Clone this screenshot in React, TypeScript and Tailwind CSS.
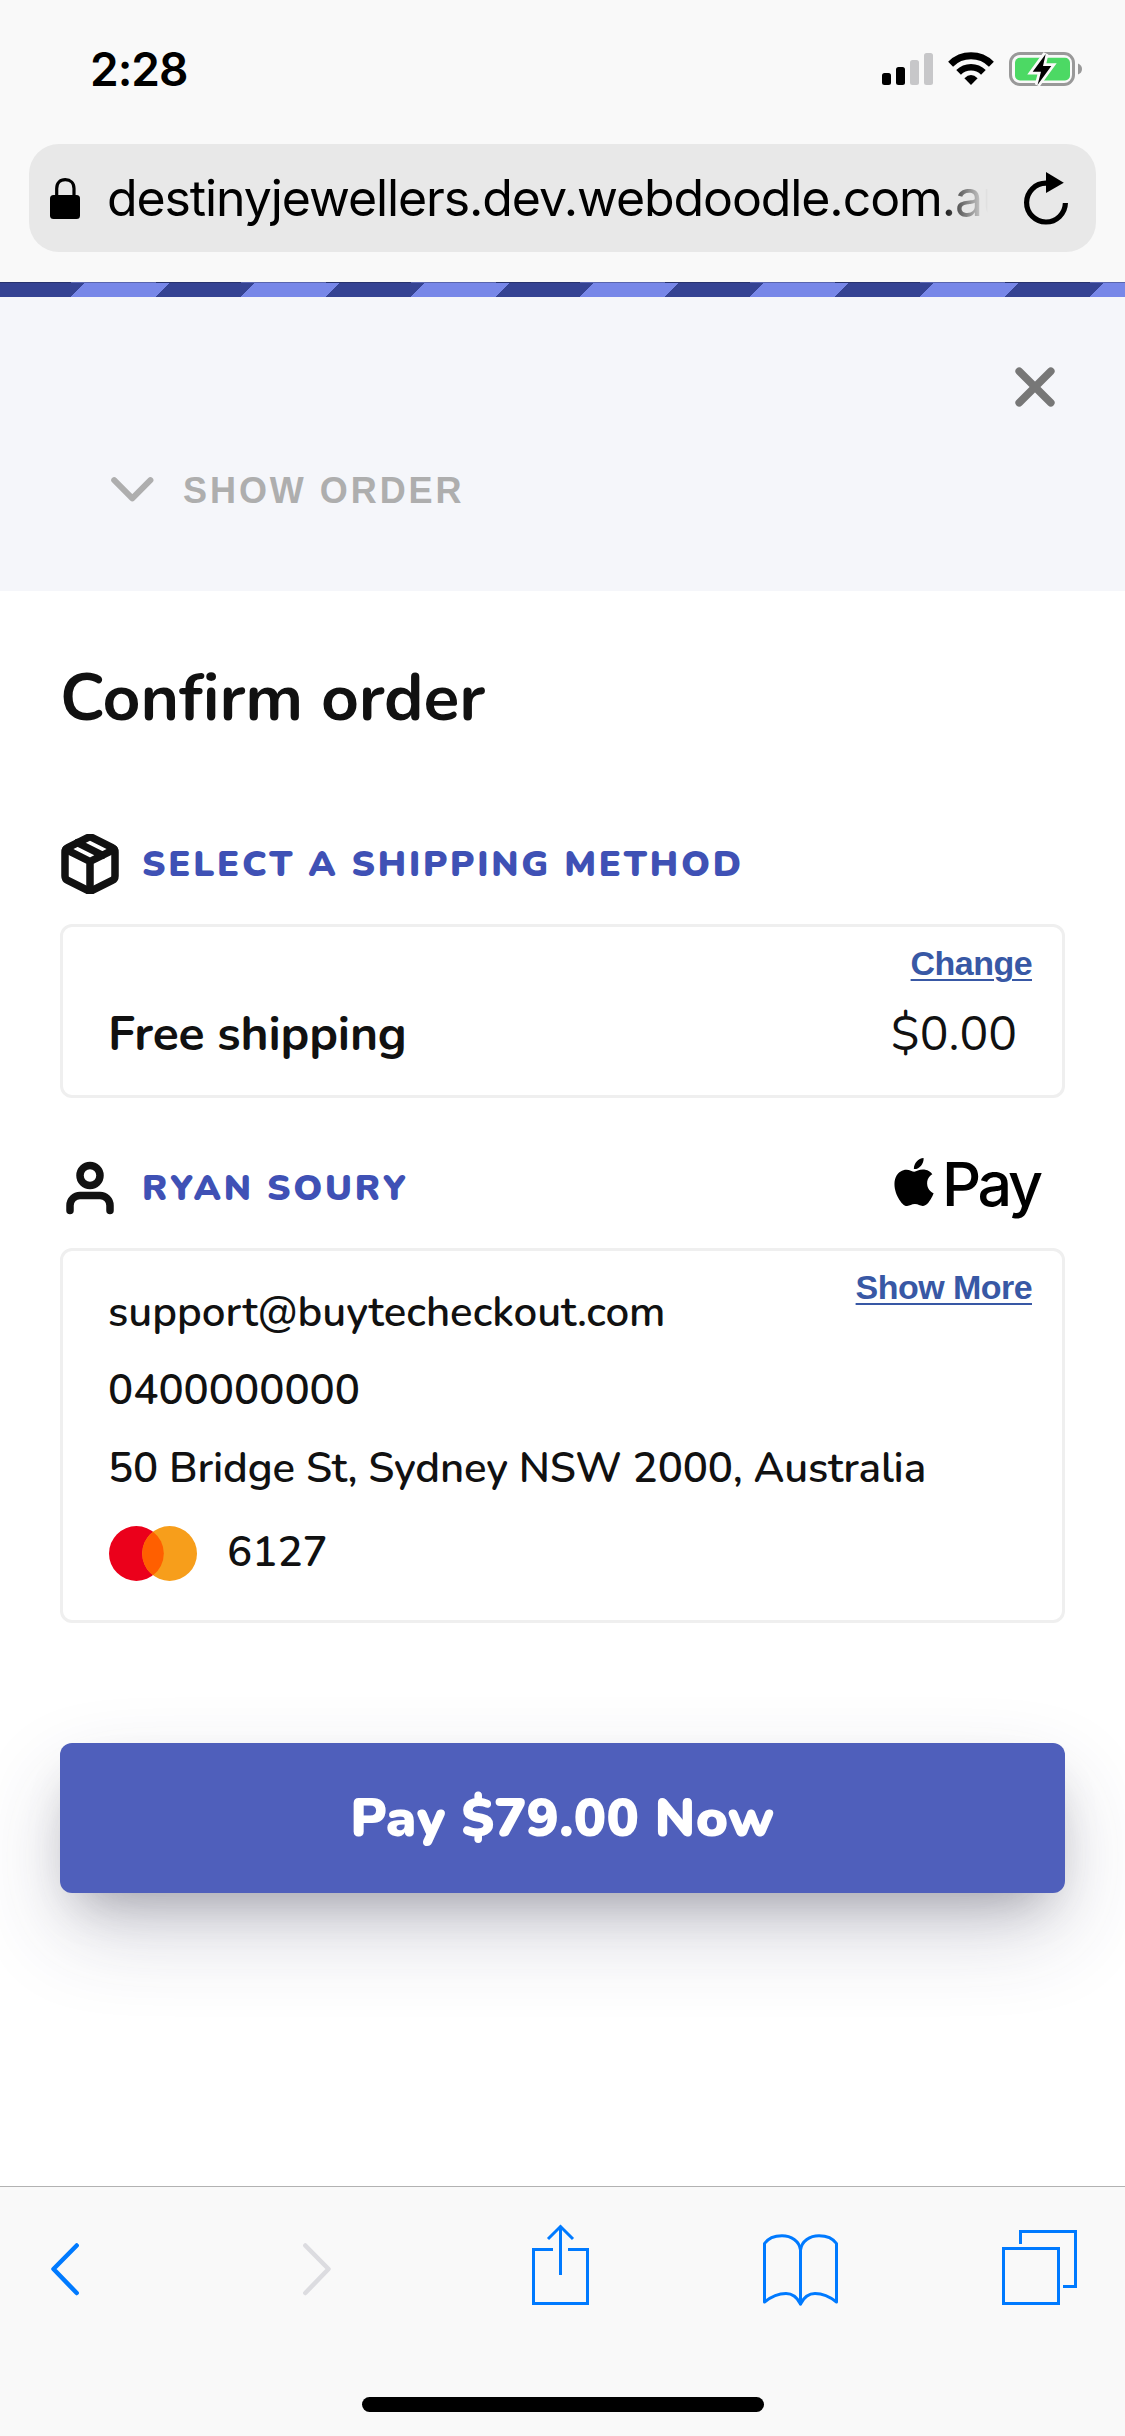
import React from "react";
import { SiApple } from "react-icons/si";

function StatusIcons() {
  return (
    <div className="flex items-center gap-[15px]">
      <svg width="51" height="33" viewBox="0 0 51 33">
        <rect x="0" y="21" width="9" height="12" rx="2.5" fill="#000" />
        <rect x="14" y="15" width="9" height="18" rx="2.5" fill="#000" />
        <rect x="28" y="8" width="9" height="25" rx="2.5" fill="#c7c7c9" />
        <rect x="42" y="1" width="9" height="32" rx="2.5" fill="#c7c7c9" />
      </svg>
      <svg width="46" height="33" viewBox="0 0 46 33" fill="none">
        <path d="M2.6 12.2A29 29 0 0 1 43.4 12.2" stroke="#000" strokeWidth="7" />
        <path d="M10.6 20.4A17.5 17.5 0 0 1 35.4 20.4" stroke="#000" strokeWidth="6.6" />
        <path d="M16.4 26.2Q23 19.6 29.6 26.2L23 32.9Z" fill="#000" />
      </svg>
      <svg width="73" height="36" viewBox="0 0 73 36" fill="none">
        <rect x="1.5" y="2.5" width="63" height="31" rx="9.5" stroke="#999" strokeWidth="3" />
        <rect x="6" y="6.8" width="55" height="22.6" rx="5" fill="#4cd964" />
        <path d="M69 12.5Q73 14 73 18Q73 22 69 23.5Z" fill="#999" />
        <path
          d="M36.7 3L23.7 20.7H32L28.5 34L42.3 15H34Z"
          fill="#000"
          stroke="#f9f9f9"
          strokeWidth="5.5"
          paintOrder="stroke"
        />
      </svg>
    </div>
  );
}

function LockIcon() {
  return (
    <svg width="30" height="41" viewBox="0 0 30 41" fill="none">
      <rect x="0" y="17" width="30" height="24" rx="3.5" fill="#000" />
      <path d="M6.7 18V10.5C6.7 5 10 1.7 15.3 1.7S24 5 24 10.5V18" stroke="#000" strokeWidth="3.2" />
    </svg>
  );
}

function ReloadIcon() {
  return (
    <svg width="46" height="54" viewBox="0 0 46 54" fill="none">
      <path d="M42.4 32A19.4 19.4 0 1 1 23 12.2" stroke="#000" strokeWidth="5.2" />
      <path d="M23 1L40.8 11.7L23 22Z" fill="#000" />
    </svg>
  );
}

function PackageIcon() {
  return (
    <svg width="60" height="60" viewBox="0 0 24 24" fill="none" stroke="#111" strokeWidth="3" strokeLinecap="round" strokeLinejoin="round">
      <path d="M12.89 1.45l8 4A2 2 0 0 1 22 7.24v9.53a2 2 0 0 1-1.11 1.79l-8 4a2 2 0 0 1-1.79 0l-8-4a2 2 0 0 1-1.1-1.8V7.24a2 2 0 0 1 1.11-1.79l8-4a2 2 0 0 1 1.78 0z" />
      <path d="M2.32 6.16L12 11l9.68-4.84M12 22.76V11M7 3.5l10 5" />
    </svg>
  );
}

function UserIcon() {
  return (
    <svg width="60" height="60" viewBox="0 0 24 24" fill="none" stroke="#111" strokeWidth="3" strokeLinecap="round" strokeLinejoin="round">
      <path d="M20 21v-2a4 4 0 0 0-4-4H8a4 4 0 0 0-4 4v2" />
      <circle cx="12" cy="7" r="4" />
    </svg>
  );
}

function CardBrand() {
  return (
    <svg width="88" height="55" viewBox="0 0 88 55">
      <circle cx="27.4" cy="27.5" r="27.4" fill="#eb001b" />
      <circle cx="60.6" cy="27.5" r="27.4" fill="#f79e1b" />
      <path d="M44 5.7A27.4 27.4 0 0 1 44 49.3A27.4 27.4 0 0 1 44 5.7Z" fill="#ff5f00" />
    </svg>
  );
}

function SectionTitle({ icon, children }: { icon: React.ReactNode; children: React.ReactNode }) {
  return (
    <div className="flex h-[60px] items-center gap-[21px]">
      {icon}
      <h2 className="pt-[2px] pl-px text-[36px] leading-none font-black tracking-[2.8px] whitespace-nowrap text-[#3f51b5]">{children}</h2>
    </div>
  );
}

function BoxLink({ children }: { children: React.ReactNode }) {
  return (
    <a className="font-['Liberation_Sans',sans-serif] text-[34px] leading-[42px] font-bold tracking-[-0.55px] whitespace-nowrap text-[#3858a5] underline decoration-[2px] underline-offset-[4px]">
      {children}
    </a>
  );
}

function Toolbar() {
  return (
    <footer className="flex h-[250px] shrink-0 flex-col border-t border-[#b2b2b2] bg-[#f9f9f9] pt-[36px]">
      <div className="flex pl-[50px]">
        <svg width="30" height="84" fill="none" stroke="#007aff" strokeWidth="4.5" strokeLinecap="round" strokeLinejoin="round">
          <path d="M26.7 22.5L3.5 46L26.7 70" />
        </svg>
        <svg className="ml-[222px]" width="30" height="84" fill="none" stroke="#dcdce0" strokeWidth="4.5" strokeLinecap="round" strokeLinejoin="round">
          <path d="M3.3 22.5L26.5 46L3.3 70" />
        </svg>
        <svg className="ml-[199px]" width="60" height="84" fill="none" stroke="#007aff" strokeWidth="3">
          <path d="M22 26.5H2.5V80.5H56.5V26.5H37M29.5 4V52M17 16L29.5 3.5L42 16" />
        </svg>
        <svg className="ml-[171px]" width="77" height="84" fill="none" stroke="#007aff" strokeWidth="3" strokeLinejoin="round">
          <path d="M2.5 20.5C6 15.5 13 12.7 20 12.7C29 12.7 37.5 18 38.5 27V81C35.5 75 31 70.5 24 70.5C16.5 70.5 10 73 2.5 79Z" />
          <path d="M74.5 20.5C71 15.5 64 12.7 57 12.7C48 12.7 39.5 18 38.5 27V81C41.5 75 46 70.5 53 70.5C60.5 70.5 67 73 74.5 79Z" />
        </svg>
        <svg className="ml-[162px]" width="78" height="84" fill="none" stroke="#007aff" strokeWidth="3">
          <path d="M2.5 25.5H57.5V80.5H2.5ZM19.5 21V8.5H74.5V63.5H62" />
        </svg>
      </div>
      <div className="mt-[90px] h-[15px] w-[402px] self-center rounded-full bg-black" />
    </footer>
  );
}

export default function App() {
  return (
    <div className="flex h-[2436px] w-[1125px] flex-col overflow-hidden bg-white font-[Nunito,'Noto_Sans',sans-serif] text-[#111]">
      <header className="h-[282px] shrink-0 bg-[#f9f9f9] px-[29px] font-[Inter,sans-serif] text-black">
        <div className="flex h-[137px] items-center justify-between pr-[14px] pl-[61px]">
          <span className="text-[46px] leading-none font-semibold tracking-[-1px]">2:28</span>
          <StatusIcons />
        </div>
        <div className="mt-[7px] flex h-[108px] items-center rounded-[30px] bg-[#e8e8e8] pr-[27px] pl-[21px]">
          <LockIcon />
          <div className="ml-[27px] w-[881px] overflow-hidden [mask-image:linear-gradient(to_right,#000_832px,transparent_881px)]">
            <span className="text-[50px] leading-[70px] tracking-[-1.1px] whitespace-nowrap">destinyjewellers.dev.webdoodle.com.au</span>
          </div>
          <div className="ml-auto">
            <ReloadIcon />
          </div>
        </div>
      </header>

      <div className="h-[15px] shrink-0 border-t border-black/25 bg-[repeating-linear-gradient(135deg,#354393_0_60px,#7787e8_60px_120px)]" />

      <section className="h-[294px] shrink-0 bg-[#f5f6fa] pt-[70px] pr-[70px] pl-[111px]">
        <div className="flex justify-end">
          <svg width="40" height="40" fill="none" stroke="#777" strokeWidth="7.6" strokeLinecap="round">
            <path d="M4.2 4.2L35.8 35.8M35.8 4.2L4.2 35.8" />
          </svg>
        </div>
        <div className="mt-[68px] flex h-[30px] items-center gap-[29px] text-[#aeaeae]">
          <svg width="43" height="26" fill="none" stroke="currentColor" strokeWidth="6" strokeLinecap="round" strokeLinejoin="round">
            <path d="M3.2 3.2L21.3 21.3L39.4 3.2" />
          </svg>
          <span className="pt-[2px] font-['Liberation_Sans',sans-serif] text-[36px] leading-none font-bold tracking-[2.95px]">SHOW ORDER</span>
        </div>
      </section>

      <main className="flex-1 px-[60px] pt-[62px]">
        <h1 className="text-[66px] leading-[90px] font-bold tracking-[-0.1px]">Confirm order</h1>

        <div className="mt-[91px]">
          <SectionTitle icon={<PackageIcon />}>SELECT A SHIPPING METHOD</SectionTitle>
        </div>
        <div className="mt-[30px] flex h-[174px] flex-col rounded-[12px] border-3 border-[#efefef] pt-[15px] pr-[30px] pl-[45px]">
          <div className="flex h-[42px] justify-end">
            <BoxLink>Change</BoxLink>
          </div>
          <div className="mt-[17px] flex items-center justify-between pr-[15px] text-[48px] leading-[66px]">
            <span className="font-bold tracking-[-0.15px]">Free shipping</span>
            <span className="font-normal">$0.00</span>
          </div>
        </div>

        <div className="mt-[60px] flex items-center justify-between">
          <SectionTitle icon={<UserIcon />}>RYAN SOURY</SectionTitle>
          <div className="flex items-center pr-[25px] font-[Inter,sans-serif] text-black">
            <SiApple size={48} className="-mt-[12px]" />
            <span className="-mt-[8px] ml-[4px] text-[61px] leading-[60px] font-medium tracking-[-3.2px]">Pay</span>
          </div>
        </div>
        <div className="mt-[30px] flex h-[375px] items-start justify-between rounded-[12px] border-3 border-[#efefef] pr-[30px] pl-[45px]">
          <div className="pt-[23px] text-[42px] leading-[78px] font-semibold whitespace-nowrap">
            <p>support@buytecheckout.com</p>
            <p>0400000000</p>
            <p className="tracking-[-0.15px]">50 Bridge St, Sydney NSW 2000, Australia</p>
            <div className="flex h-[90px] items-center gap-[30px] pl-px">
              <CardBrand />
              <span>6127</span>
            </div>
          </div>
          <div className="-ml-[300px] pt-[15px]">
            <BoxLink>Show More</BoxLink>
          </div>
        </div>

        <button className="mt-[120px] h-[150px] w-full rounded-[12px] bg-[#4f5fbb] text-[54px] font-black tracking-[0.15px] text-white shadow-[0_39px_90px_-6px_rgba(50,50,93,0.24),0_24px_50px_-20px_rgba(0,0,0,0.28)]">
          Pay $79.00 Now
        </button>
      </main>

      <Toolbar />
    </div>
  );
}
